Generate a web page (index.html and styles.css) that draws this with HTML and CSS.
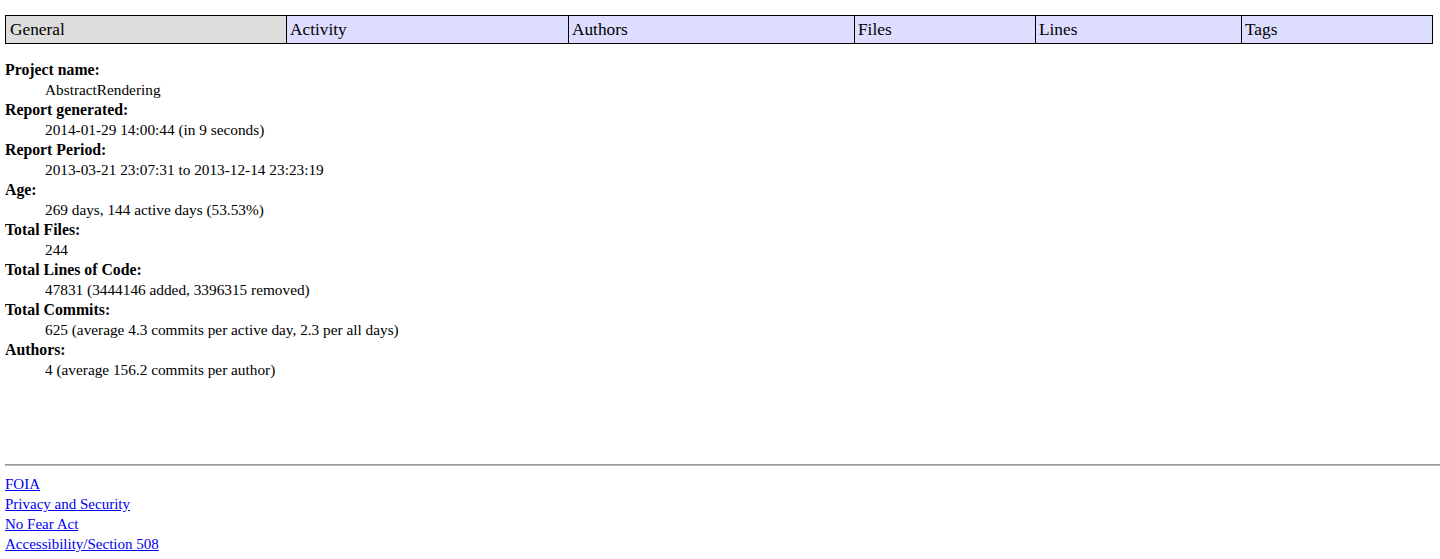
FILE: index.html
```html
<!DOCTYPE html>
<html>
<head>
<meta charset="utf-8">
<title>GitStats - AbstractRendering</title>
<link rel="stylesheet" href="styles.css">
</head>
<body>
<nav class="tabs">
  <a class="tab tab-current" href="#">General</a>
  <a class="tab" href="#">Activity</a>
  <a class="tab" href="#">Authors</a>
  <a class="tab" href="#">Files</a>
  <a class="tab" href="#">Lines</a>
  <a class="tab" href="#">Tags</a>
</nav>
<dl class="stats">
  <dt>Project name:</dt>
  <dd>AbstractRendering</dd>
  <dt>Report generated:</dt>
  <dd>2014-01-29 14:00:44 (in 9 seconds)</dd>
  <dt>Report Period:</dt>
  <dd>2013-03-21 23:07:31 to 2013-12-14 23:23:19</dd>
  <dt>Age:</dt>
  <dd>269 days, 144 active days (53.53%)</dd>
  <dt>Total Files:</dt>
  <dd>244</dd>
  <dt>Total Lines of Code:</dt>
  <dd>47831 (3444146 added, 3396315 removed)</dd>
  <dt>Total Commits:</dt>
  <dd>625 (average 4.3 commits per active day, 2.3 per all days)</dd>
  <dt>Authors:</dt>
  <dd>4 (average 156.2 commits per author)</dd>
</dl>
<footer class="footer">
  <hr class="rule">
  <ul class="links">
    <li><a href="#">FOIA</a></li>
    <li><a href="#">Privacy and Security</a></li>
    <li><a href="#">No Fear Act</a></li>
    <li><a href="#">Accessibility/Section 508</a></li>
  </ul>
</footer>
</body>
</html>
```
FILE: styles.css
```css
html, body {
  background: #fff;
}
body {
  margin: 15px 0 0 5px;
  font-family: "Liberation Serif", "Times New Roman", serif;
  font-size: 15px;
  line-height: 20px;
  color: #000;
}
.tabs {
  display: grid;
  grid-template-columns: 280px 282px 286px 181px 206px 191px;
  width: 1428px;
  border: 1px solid #000;
  box-sizing: border-box;
  height: 29px;
}
.tab {
  display: block;
  background: #ddf;
  color: #000;
  text-decoration: none;
  font-size: 17.3px;
  line-height: 27px;
  padding-left: 3px;
  border-left: 1px solid #000;
}
.tab:first-child {
  border-left: none;
  padding-left: 4px;
}
.tab-current {
  background: #ddd;
}
.stats {
  margin: 16px 0 0 0;
}
.stats dt {
  font-weight: bold;
  font-size: 15.8px;
}
.stats dd {
  margin-left: 40px;
  font-size: 15.3px;
}
.footer {
  margin-top: 84px;
}
.rule {
  margin: 0;
  border: none;
  border-top: 1px solid #999;
  border-bottom: 1px solid #bbb;
  height: 0;
}
.links {
  list-style: none;
  margin: 8px 0 0 0;
  padding: 0;
}
.links a {
  color: #00e;
  text-decoration: underline;
}
```
